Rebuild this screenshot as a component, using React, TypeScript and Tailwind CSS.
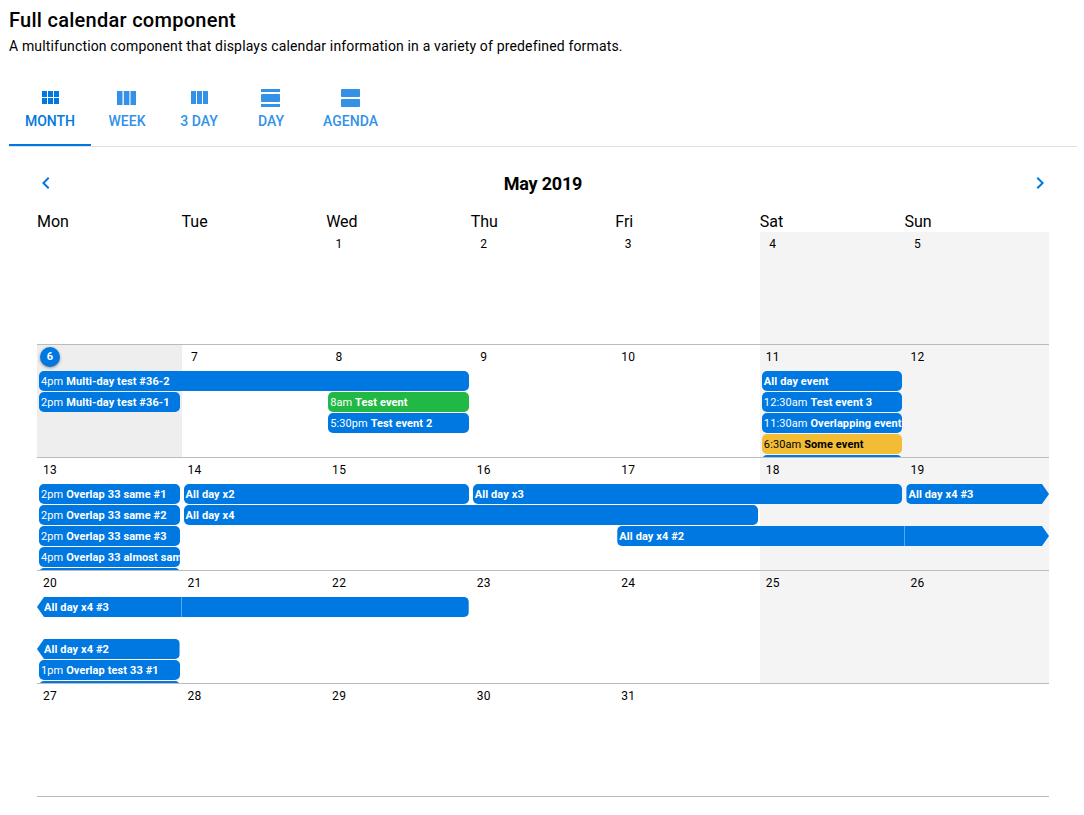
import { MdChevronLeft, MdChevronRight } from "react-icons/md";

type CalEvent = {
  col: string;
  row: string;
  time?: string;
  title?: string;
  color?: "blue" | "green" | "yellow";
  prev?: boolean;
  next?: boolean;
  divider?: string;
};

const ModuleIcon = () => (
  <svg width="24" height="24" viewBox="0 0 24 24" fill="currentColor">
    <path d="M4 11h5V5H4v6zm0 7h5v-6H4v6zm6 0h5v-6h-5v6zm6 0h5v-6h-5v6zm-6-7h5V5h-5v6zm6-6v6h5V5h-5z" />
  </svg>
);

const WeekIcon = () => (
  <svg width="24" height="24" viewBox="0 0 24 24" fill="currentColor">
    <path d="M2 5h5.5v14H2zM8.8 5h5.6v14H8.8zM15.5 5H21v14h-5.5z" />
  </svg>
);

const ColumnIcon = () => (
  <svg width="24" height="24" viewBox="0 0 24 24" fill="currentColor">
    <path d="M10 18h5V5h-5v13zm-6 0h5V5H4v13zM16 5v13h5V5h-5z" />
  </svg>
);

const DayIcon = () => (
  <svg width="24" height="24" viewBox="0 0 24 24" fill="currentColor">
    <path d="M2 21h19v-3H2v3zM20 8H3c-.55 0-1 .45-1 1v6c0 .55.45 1 1 1h17c.55 0 1-.45 1-1V9c0-.55-.45-1-1-1zM2 3v3h19V3H2z" />
  </svg>
);

const AgendaIcon = () => (
  <svg width="24" height="24" viewBox="0 0 24 24" fill="currentColor">
    <path d="M20 13H3c-.55 0-1 .45-1 1v6c0 .55.45 1 1 1h17c.55 0 1-.45 1-1v-6c0-.55-.45-1-1-1zm0-10H3c-.55 0-1 .45-1 1v6c0 .55.45 1 1 1h17c.55 0 1-.45 1-1V4c0-.55-.45-1-1-1z" />
  </svg>
);

const tabs = [
  { label: "MONTH", Icon: ModuleIcon, cls: "w-[82px] text-[#0078e2]" },
  { label: "WEEK", Icon: WeekIcon, cls: "w-[72px] text-[#3392e8]" },
  { label: "3 DAY", Icon: ColumnIcon, cls: "w-[72px] text-[#3392e8]" },
  { label: "DAY", Icon: DayIcon, cls: "w-[72px] text-[#3392e8]" },
  { label: "AGENDA", Icon: AgendaIcon, cls: "w-[87px] text-[#3392e8]" },
];

const days = ["Mon", "Tue", "Wed", "Thu", "Fri", "Sat", "Sun"];

const weeks: { dates: (number | null)[]; events: CalEvent[] }[] = [
  { dates: [null, null, 1, 2, 3, 4, 5], events: [] },
  {
    dates: [6, 7, 8, 9, 10, 11, 12],
    events: [
      { col: "col-start-1 col-span-3", row: "row-start-1", time: "4pm", title: "Multi-day test #36-2" },
      { col: "col-start-6", row: "row-start-1", title: "All day event" },
      { col: "col-start-1", row: "row-start-2", time: "2pm", title: "Multi-day test #36-1" },
      { col: "col-start-3", row: "row-start-2", time: "8am", title: "Test event", color: "green" },
      { col: "col-start-6", row: "row-start-2", time: "12:30am", title: "Test event 3" },
      { col: "col-start-3", row: "row-start-3", time: "5:30pm", title: "Test event 2" },
      { col: "col-start-6", row: "row-start-3", time: "11:30am", title: "Overlapping event" },
      { col: "col-start-6", row: "row-start-4", time: "6:30am", title: "Some event", color: "yellow" },
      { col: "col-start-6", row: "row-start-5" },
    ],
  },
  {
    dates: [13, 14, 15, 16, 17, 18, 19],
    events: [
      { col: "col-start-1", row: "row-start-1", time: "2pm", title: "Overlap 33 same #1" },
      { col: "col-start-2 col-span-2", row: "row-start-1", title: "All day x2" },
      { col: "col-start-4 col-span-3", row: "row-start-1", title: "All day x3" },
      { col: "col-start-7", row: "row-start-1", title: "All day x4 #3", next: true },
      { col: "col-start-1", row: "row-start-2", time: "2pm", title: "Overlap 33 same #2" },
      { col: "col-start-2 col-span-4", row: "row-start-2", title: "All day x4" },
      { col: "col-start-1", row: "row-start-3", time: "2pm", title: "Overlap 33 same #3" },
      { col: "col-start-5 col-span-3", row: "row-start-3", title: "All day x4 #2", next: true, divider: "right-[144px]" },
      { col: "col-start-1", row: "row-start-4", time: "4pm", title: "Overlap 33 almost same" },
      { col: "col-start-1", row: "row-start-5" },
    ],
  },
  {
    dates: [20, 21, 22, 23, 24, 25, 26],
    events: [
      { col: "col-start-1 col-span-3", row: "row-start-1", title: "All day x4 #3", prev: true, divider: "left-[144px]" },
      { col: "col-start-1", row: "row-start-3", title: "All day x4 #2", prev: true },
      { col: "col-start-1", row: "row-start-4", time: "1pm", title: "Overlap test 33 #1" },
      { col: "col-start-1", row: "row-start-5" },
    ],
  },
  { dates: [27, 28, 29, 30, 31, null, null], events: [] },
];

const colors = {
  blue: "bg-[#0078e2] text-white",
  green: "bg-[#22b845] text-white",
  yellow: "bg-[#f2bd35] text-black",
};

function EventBar({ ev }: { ev: CalEvent }) {
  let shape = "ml-0.5 mr-0.5 rounded-[5px] pl-0.5";
  if (ev.next) {
    shape = "ml-0.5 rounded-l-[5px] pl-0.5 [clip-path:polygon(0_0,calc(100%-7px)_0,100%_50%,calc(100%-7px)_100%,0_100%)]";
  }
  if (ev.prev) {
    shape = "mr-0.5 rounded-r-[5px] pl-[7px] [clip-path:polygon(7px_0,100%_0,100%_100%,7px_100%,0_50%)]";
  }
  return (
    <div
      className={`relative h-5 overflow-hidden whitespace-nowrap text-[11px] leading-[21px] tracking-[0.1px] ${ev.col} ${ev.row} ${shape} ${colors[ev.color ?? "blue"]}`}
    >
      {ev.time && <span>{ev.time} </span>}
      <span className="font-bold">{ev.title}</span>
      {ev.divider && <div className={`absolute inset-y-0 w-px bg-[#5aa6ea] ${ev.divider}`} />}
    </div>
  );
}

function Week({ dates, events, index }: { dates: (number | null)[]; events: CalEvent[]; index: number }) {
  return (
    <div className="relative h-[113px] overflow-hidden border-b border-[#bbb]">
      <div className="grid h-full grid-cols-7">
        {dates.map((d, i) => {
          let bg = "";
          if (d === 6) bg = "bg-[#eee]";
          else if (i > 4 && index < 4) bg = "bg-[#f4f4f4]";
          return (
            <div key={i} className={`pt-[2px] pl-0.5 ${bg}`}>
              {d === 6 ? (
                <div className="ml-px flex h-5 w-5 items-center justify-center rounded-full bg-[#0078e2] text-[11px] font-bold text-white shadow-[0_1px_3px_rgba(0,0,0,0.4)]">
                  6
                </div>
              ) : (
                d && <div className="h-5 w-[22px] text-center text-xs leading-5 tracking-[0.3px] text-black">{d}</div>
              )}
            </div>
          );
        })}
      </div>
      <div className="absolute inset-x-0 top-[26px] grid auto-rows-[20px] grid-cols-7 gap-y-px">
        {events.map((ev, i) => (
          <EventBar key={i} ev={ev} />
        ))}
      </div>
    </div>
  );
}

export default function App() {
  return (
    <div className="bg-white pr-[7px] pl-[9px] font-['Roboto',sans-serif] text-black">
      <h1 className="pt-[8px] text-xl leading-[25px] font-medium tracking-[0.27px]">Full calendar component</h1>
      <p className="mt-1 text-sm leading-[19px] tracking-[0.16px]">
        A multifunction component that displays calendar information in a variety of predefined formats.
      </p>
      <div className="mt-6 flex h-[67px] border-b border-[#e0e0e0]">
        {tabs.map(({ label, Icon, cls }, i) => (
          <div key={label} className={`relative flex flex-col items-center pt-[6px] ${cls}`}>
            <Icon />
            <span className="mt-[3px] text-sm leading-4 font-medium">{label}</span>
            {i === 0 && <div className="absolute inset-x-0 bottom-0 h-0.5 bg-[#0078e2]" />}
          </div>
        ))}
      </div>
      <div className="px-7">
        <div className="flex h-[58px] items-center justify-between pt-4 text-[#0078e2]">
          <MdChevronLeft size={24} className="-mt-0.5 -ml-[3px]" />
          <span className="text-lg font-bold tracking-[-0.2px] text-black">May 2019</span>
          <MdChevronRight size={24} className="-mt-0.5 -mr-[3px]" />
        </div>
        <div className="grid h-[27px] grid-cols-7 pt-[7px] text-base leading-5">
          {days.map((d) => (
            <div key={d}>{d}</div>
          ))}
        </div>
        {weeks.map((w, i) => (
          <Week key={i} index={i} dates={w.dates} events={w.events} />
        ))}
      </div>
    </div>
  );
}
